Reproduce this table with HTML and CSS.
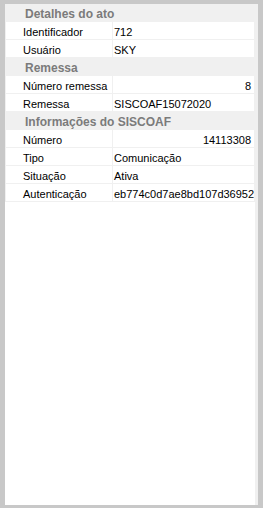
FILE: index.html
```html
<!DOCTYPE html>
<html lang="pt">
<head>
<meta charset="utf-8">
<link rel="stylesheet" href="styles.css">
</head>
<body>
<div class="panel">
  <div class="table">
    <div class="hdr">Detalhes do ato</div>
    <div class="row"><div class="lbl">Identificador</div><div class="val">712</div></div>
    <div class="row"><div class="lbl">Usuário</div><div class="val">SKY</div></div>
    <div class="hdr">Remessa</div>
    <div class="row"><div class="lbl">Número remessa</div><div class="val num">8</div></div>
    <div class="row"><div class="lbl">Remessa</div><div class="val">SISCOAF15072020</div></div>
    <div class="hdr">Informações do SISCOAF</div>
    <div class="row"><div class="lbl">Número</div><div class="val num">14113308</div></div>
    <div class="row"><div class="lbl">Tipo</div><div class="val">Comunicação</div></div>
    <div class="row"><div class="lbl">Situação</div><div class="val">Ativa</div></div>
    <div class="row"><div class="lbl">Autenticação</div><div class="val">eb774c0d7ae8bd107d36952</div></div>
  </div>
</div>
</body>
</html>
```
FILE: styles.css
```css
html, body {
  margin: 0;
  padding: 0;
}
body {
  background: #c8c8c8;
  font-family: "Liberation Sans", Arial, sans-serif;
  font-size: 11px;
  color: #000;
  padding: 4px 5px 3px 5px;
  height: 508px;
  box-sizing: border-box;
}
.panel {
  height: 501px;
  width: 253px;
  box-sizing: border-box;
  background: #fff;
  border-right: 3px solid #f0f0f0;
}
.table {
  background: #f0f0f0;
  display: flex;
  flex-direction: column;
}
.hdr {
  height: 18px;
  box-sizing: border-box;
  padding: 3px 0 0 20px;
  line-height: 15px;
  font-size: 12px;
  font-weight: bold;
  color: #7b7b7b;
  white-space: nowrap;
}
.row {
  display: grid;
  grid-template-columns: 106px 141px;
  column-gap: 1px;
  padding: 0 1px 1px 1px;
}
.row > div {
  background: #fff;
  height: 17px;
  box-sizing: border-box;
  padding-top: 2px;
  line-height: 16px;
  white-space: nowrap;
  overflow: hidden;
}
.lbl {
  padding-left: 17px;
}
.val {
  padding-left: 1px;
  padding-right: 3px;
}
.val.num {
  text-align: right;
}
```
